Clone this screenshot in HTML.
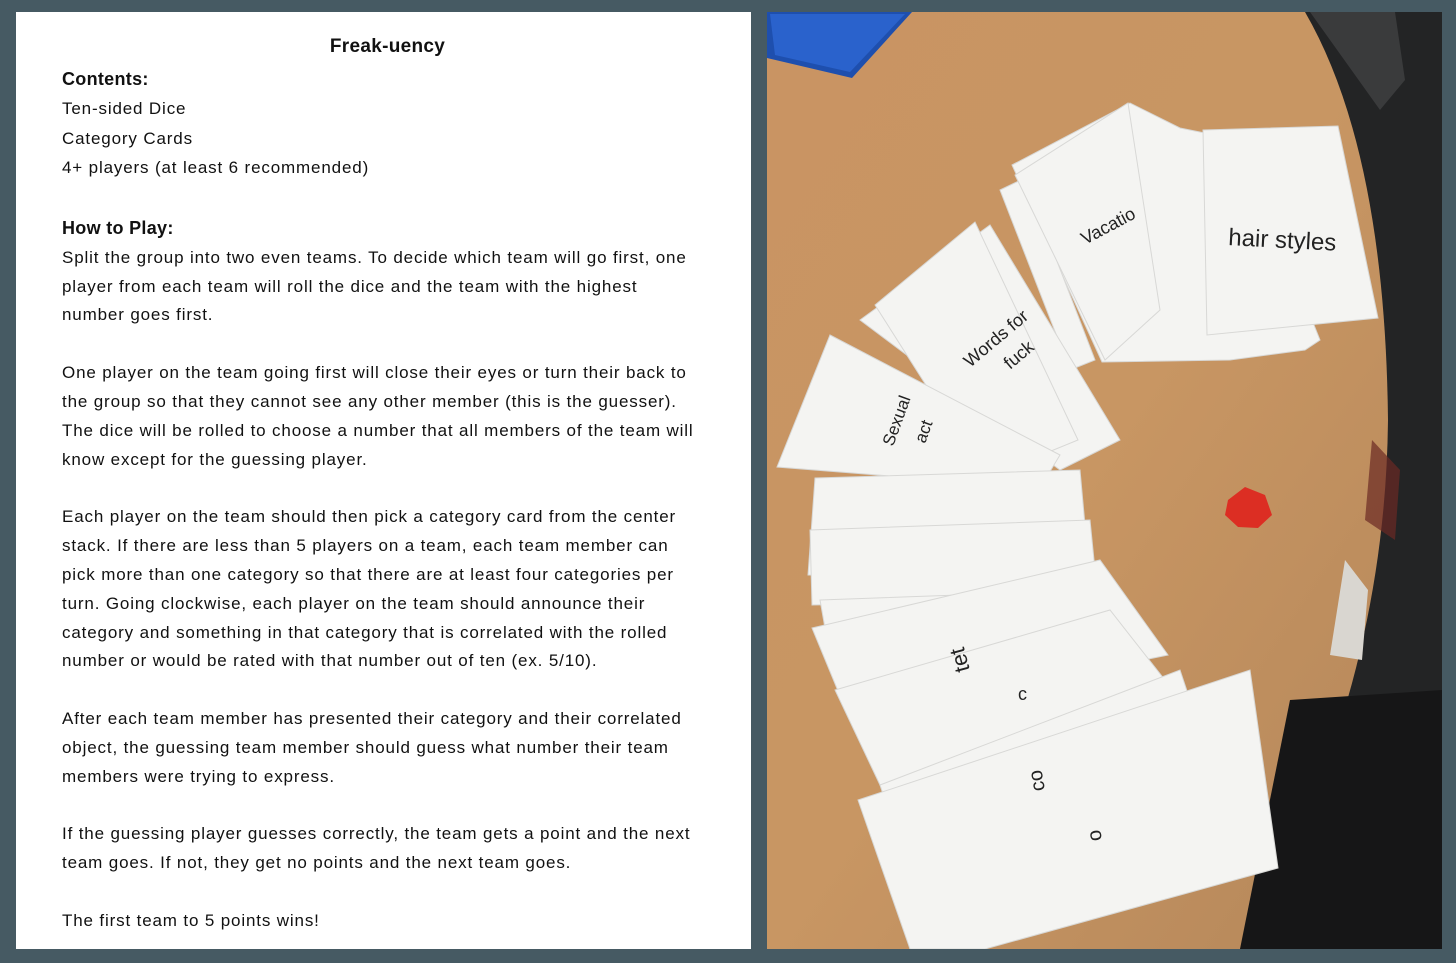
<!DOCTYPE html>
<html><head><meta charset="utf-8">
<style>
html,body{margin:0;padding:0;width:1456px;height:963px;overflow:hidden;background:#465a63;}
#left{position:absolute;left:16px;top:12px;width:735px;height:937px;background:#fff;}
.t{position:absolute;left:46px;font-family:"Liberation Sans",sans-serif;font-size:17px;letter-spacing:0.85px;color:#111;white-space:nowrap;}
.b{font-weight:bold;letter-spacing:0.3px;}
#photo{position:absolute;left:767px;top:12px;width:675px;height:937px;overflow:hidden;}
</style></head><body>
<div id="left">
<div class="t b" style="left:0;width:743px;text-align:center;top:23px;font-size:19px;line-height:24px;">Freak-uency</div>
<div class="t" style="top:53px;line-height:29.3px;"><span class="b" style="font-size:18px">Contents:</span><br>Ten-sided Dice<br>Category Cards<br>4+ players (at least 6 recommended)</div>
<div class="t" style="top:202px;line-height:28.83px;"><span class="b" style="font-size:18px">How to Play:</span><br>Split the group into two even teams. To decide which team will go first, one<br>player from each team will roll the dice and the team with the highest<br>number goes first.<br><br>One player on the team going first will close their eyes or turn their back to<br>the group so that they cannot see any other member (this is the guesser).<br>The dice will be rolled to choose a number that all members of the team will<br>know except for the guessing player.<br><br>Each player on the team should then pick a category card from the center<br>stack. If there are less than 5 players on a team, each team member can<br>pick more than one category so that there are at least four categories per<br>turn. Going clockwise, each player on the team should announce their<br>category and something in that category that is correlated with the rolled<br>number or would be rated with that number out of ten (ex. 5/10).<br><br>After each team member has presented their category and their correlated<br>object, the guessing team member should guess what number their team<br>members were trying to express.<br><br>If the guessing player guesses correctly, the team gets a point and the next<br>team goes. If not, they get no points and the next team goes.<br><br>The first team to 5 points wins!</div>
</div>
<div id="photo">
<svg width="675" height="937" viewBox="767 12 675 937" xmlns="http://www.w3.org/2000/svg">
<defs>
<linearGradient id="wood" x1="0" y1="0" x2="1" y2="1">
<stop offset="0" stop-color="#c99463"/><stop offset="0.5" stop-color="#c89663"/><stop offset="1" stop-color="#b5875a"/>
</linearGradient>
</defs>
<rect x="767" y="12" width="675" height="937" fill="#232425"/>
<path d="M767 12 L1305 12 Q1385 150 1388 420 Q1385 700 1240 949 L767 949 Z" fill="url(#wood)"/>
<path d="M1310 12 L1395 12 L1405 80 L1380 110 Z" fill="#3a3b3c"/>
<path d="M1372 440 L1400 470 L1395 540 L1365 520 Z" fill="#6b2a24" opacity="0.7"/>
<path d="M1345 560 L1368 590 L1362 660 L1330 655 Z" fill="#d9d6d0"/>
<path d="M1290 700 L1442 690 L1442 949 L1240 949 Z" fill="#161617"/>
<path d="M767 12 L912 12 L852 78 L767 58 Z" fill="#1e4fae"/>
<path d="M770 14 L905 14 L850 72 L775 55 Z" fill="#2a62cc"/>
<g fill="#f4f4f2" stroke="#d8d8d6" stroke-width="1">
<polygon points="1012,165 1130,103 1180,128 1240,140 1320,340 1305,350 1230,360 1102,362"/>
<polygon points="1000,190 1025,178 1095,360 1070,370"/>
<polygon points="1203,130 1338,126 1378,318 1207,335"/>
<polygon points="1015,175 1128,103 1160,310 1105,360"/>
<polygon points="860,320 990,225 1120,440 1060,470"/>
<polygon points="875,305 975,222 1078,440 985,478"/>
<polygon points="777,467 830,335 1060,455 1040,488"/>
<polygon points="815,478 1080,470 1090,580 808,575"/>
<polygon points="810,530 1090,520 1098,600 812,605"/>
<polygon points="820,600 1095,590 1100,640 828,645"/>
<polygon points="812,628 1100,560 1168,655 850,720"/>
<polygon points="835,690 1110,610 1190,712 880,785"/>
<polygon points="880,785 1180,670 1195,715 905,860"/>
<polygon points="858,800 1250,670 1278,868 985,949 910,949"/>
</g>
<g fill="#dc2e23"><polygon points="1228,500 1245,487 1265,495 1272,515 1258,528 1238,527 1225,515"/></g>
<g font-family="Liberation Sans, sans-serif" font-size="20" fill="#222">
<text x="1228" y="245" transform="rotate(3 1228 245)" font-size="24">hair styles</text>
<text x="1085" y="245" transform="rotate(-28 1085 245)" font-size="18">Vacatio</text>
<text x="970" y="368" transform="rotate(-40 970 368)" font-size="18">Words for</text>
<text x="1010" y="370" transform="rotate(-40 1010 370)" font-size="18">fuck</text>
<text x="893" y="447" transform="rotate(-70 893 447)" font-size="17">Sexual</text>
<text x="925" y="444" transform="rotate(-70 925 444)" font-size="17">act</text>
<text x="970" y="670" transform="rotate(-105 970 670)" font-size="22">tet</text>
<text x="1018" y="700" font-size="18">c</text>
<text x="1045" y="790" transform="rotate(-100 1045 790)" font-size="20">co</text>
<text x="1102" y="840" transform="rotate(-100 1102 840)" font-size="20">o</text>
</g>
</svg>
</div>
</body></html>
